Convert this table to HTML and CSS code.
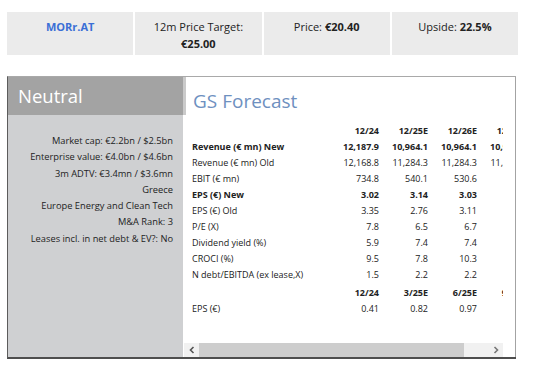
FILE: index.html
```html
<!DOCTYPE html>
<html>
<head>
<meta charset="utf-8">
<link rel="stylesheet" href="styles.css">
</head>
<body>
<div class="page">
  <div class="topbar">
    <div class="cell"><span class="ticker">MORr.AT</span></div>
    <div class="cell">12m Price Target:<br><b>€25.00</b></div>
    <div class="cell">Price: <b>€20.40</b></div>
    <div class="cell">Upside: <b>22.5%</b></div>
  </div>

  <div class="card">
    <div class="rating">
      <div class="rating-head">Neutral</div>
      <div class="rating-body">
        <div>Market cap: €2.2bn / $2.5bn</div>
        <div>Enterprise value: €4.0bn / $4.6bn</div>
        <div>3m ADTV: €3.4mn / $3.6mn</div>
        <div>Greece</div>
        <div>Europe Energy and Clean Tech</div>
        <div>M&amp;A Rank: 3</div>
        <div>Leases incl. in net debt &amp; EV?: No</div>
      </div>
    </div>
    <div class="forecast">
      <div class="fc-head">GS Forecast</div>
      <div class="fc-scroll">
        <table class="fc-table">
          <colgroup><col class="c-label"><col class="c-num"><col class="c-num"><col class="c-num"><col class="c-num"></colgroup>
          <tr class="bold"><td></td><td>12/24</td><td>12/25E</td><td>12/26E</td><td>12/27E</td></tr>
          <tr class="bold"><td>Revenue (€ mn) New</td><td>12,187.9</td><td>10,964.1</td><td>10,964.1</td><td>10,964.1</td></tr>
          <tr><td>Revenue (€ mn) Old</td><td>12,168.8</td><td>11,284.3</td><td>11,284.3</td><td>11,284.3</td></tr>
          <tr><td>EBIT (€ mn)</td><td>734.8</td><td>540.1</td><td>530.6</td><td>530.6</td></tr>
          <tr class="bold"><td>EPS (€) New</td><td>3.02</td><td>3.14</td><td>3.03</td><td>3.03</td></tr>
          <tr><td>EPS (€) Old</td><td>3.35</td><td>2.76</td><td>3.11</td><td>3.11</td></tr>
          <tr><td>P/E (X)</td><td>7.8</td><td>6.5</td><td>6.7</td><td>6.7</td></tr>
          <tr><td>Dividend yield (%)</td><td>5.9</td><td>7.4</td><td>7.4</td><td>7.4</td></tr>
          <tr><td>CROCI (%)</td><td>9.5</td><td>7.8</td><td>10.3</td><td>10.3</td></tr>
          <tr><td>N debt/EBITDA (ex lease,X)</td><td>1.5</td><td>2.2</td><td>2.2</td><td>2.2</td></tr>
          <tr class="bold sub"><td></td><td>12/24</td><td>3/25E</td><td>6/25E</td><td>9/25E</td></tr>
          <tr><td>EPS (€)</td><td>0.41</td><td>0.82</td><td>0.97</td><td>0.97</td></tr>
        </table>
      </div>
      <div class="hscroll">
        <div class="sb-btn"><svg width="8" height="8" viewBox="0 0 8 8"><path d="M5.5 1 L2.5 4 L5.5 7" fill="none" stroke="#555" stroke-width="1.6"/></svg></div>
        <div class="sb-thumb"></div>
        <div class="sb-track"></div>
        <div class="sb-btn"><svg width="8" height="8" viewBox="0 0 8 8"><path d="M2.5 1 L5.5 4 L2.5 7" fill="none" stroke="#777" stroke-width="1.6"/></svg></div>
      </div>
    </div>
  </div>
</div>
</body>
</html>
```

FILE: styles.css
```css
* { box-sizing: border-box; }
html, body { margin: 0; padding: 0; background: #fff; }
body {
  font-family: "Open Sans", "Liberation Sans", sans-serif;
  color: #222;
}
.page {
  padding: 12px 0 0 7px;
  width: 520px;
}
.topbar {
  display: grid;
  grid-template-columns: repeat(4, 1fr);
  gap: 2px;
  width: 511px;
  font-size: 11px;
  line-height: 17px;
}
.topbar .cell {
  background: #ebebeb;
  text-align: center;
  padding: 6px 4px 3px;
  min-height: 43px;
  color: #222;
}
.topbar b { font-weight: 700; }
.ticker { color: #3a6fd6; font-weight: 700; }

.card {
  margin-top: 21px;
  width: 509px;
  height: 283px;
  display: flex;
  border-top: 1px solid #a9a9a9;
  border-left: 1px solid #5c5c5c;
  border-bottom: 2px solid #4e4e4e;
}
.rating {
  width: 175px;
  background: #cfd0d2;
  display: flex;
  flex-direction: column;
}
.rating-head {
  height: 38px;
  background: #a3a3a3;
  color: #fff;
  font-size: 18.5px;
  line-height: 38px;
  padding-left: 10px;
}
.rating-body {
  padding: 18px 10px 0 0;
  text-align: right;
  font-size: 9.3px;
  line-height: 16.3px;
  color: #222;
}
.forecast {
  flex: 1;
  display: flex;
  flex-direction: column;
  border-right: 1px solid #a3a3a3;
  padding-right: 12px;
  min-width: 0;
}
.fc-head {
  height: 38px;
  border-left: 3px solid #cacaca;
  padding: 12px 0 0 7px;
  font-size: 19px;
  line-height: 24px;
  color: #6e90bf;
}
.fc-scroll {
  flex: 1;
  overflow: hidden;
  padding: 8px 0 0 9px;
}
.fc-table {
  border-collapse: collapse;
  table-layout: fixed;
  width: 334px;
  font-size: 9px;
  color: #222;
}
.fc-table .c-label { width: 138px; }
.fc-table .c-num { width: 49px; }
.fc-table td {
  padding: 0;
  height: 16px;
  line-height: 16px;
  white-space: nowrap;
  text-align: right;
  overflow: visible;
}
.fc-table td:first-child { text-align: left; }
.fc-table tr.bold td { font-weight: 700; }
.fc-table tr.sub td { height: 18px; padding-top: 2px; }
.hscroll {
  height: 14px;
  margin-left: 1px;
  display: flex;
  background: #f1f1f1;
}
.sb-btn {
  width: 15px;
  display: flex;
  align-items: center;
  justify-content: center;
}
.sb-thumb {
  width: 265px;
  background: #cdcdcd;
}
.sb-track { flex: 1; }
```
